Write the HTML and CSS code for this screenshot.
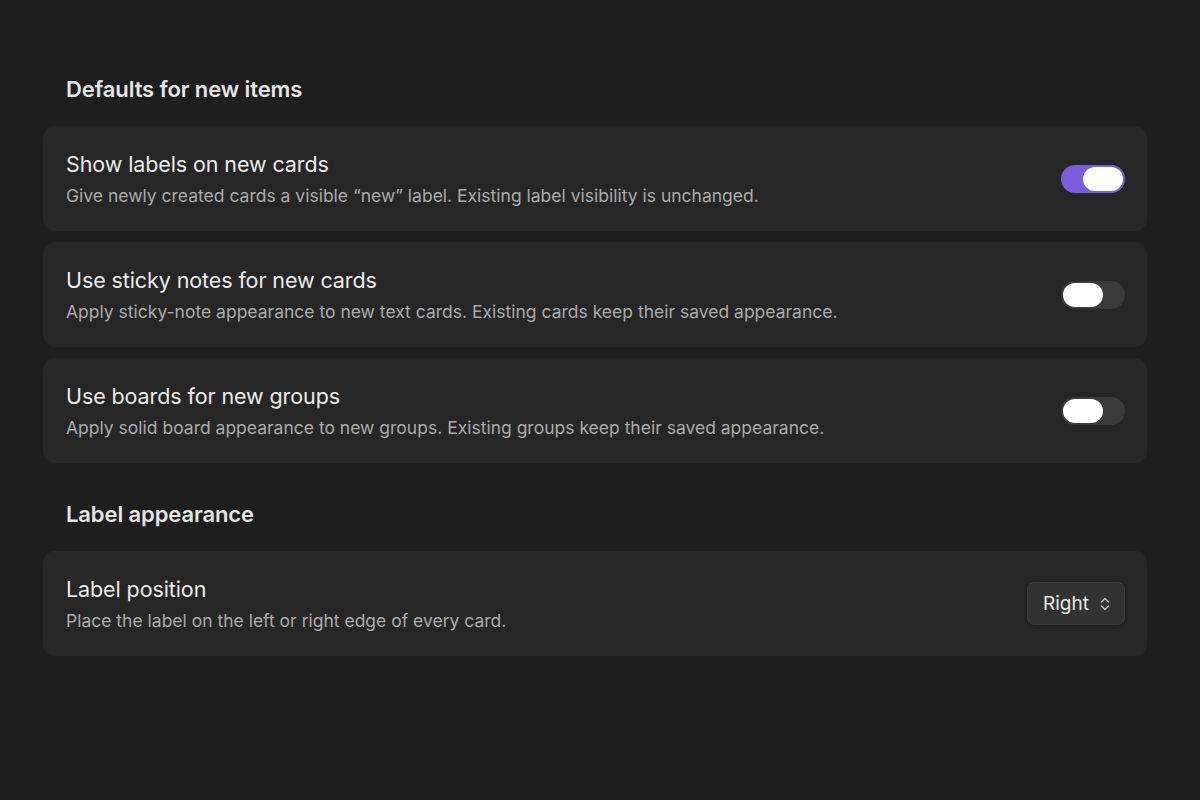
FILE: index.html
```html
<!DOCTYPE html>
<html lang="en">
<head>
<meta charset="utf-8">
<title>Settings</title>
<link rel="stylesheet" href="styles.css">
</head>
<body>
<main class="settings">
  <section class="group">
    <h2 class="group-title">Defaults for new items</h2>
    <div class="rows">
      <div class="row">
        <div class="text">
          <div class="title">Show labels on new cards</div>
          <div class="desc">Give newly created cards a visible “new” label. Existing label visibility is unchanged.</div>
        </div>
        <div class="toggle on"><span class="knob"></span></div>
      </div>
      <div class="row">
        <div class="text">
          <div class="title">Use sticky notes for new cards</div>
          <div class="desc">Apply sticky-note appearance to new text cards. Existing cards keep their saved appearance.</div>
        </div>
        <div class="toggle"><span class="knob"></span></div>
      </div>
      <div class="row">
        <div class="text">
          <div class="title">Use boards for new groups</div>
          <div class="desc">Apply solid board appearance to new groups. Existing groups keep their saved appearance.</div>
        </div>
        <div class="toggle"><span class="knob"></span></div>
      </div>
    </div>
  </section>
  <section class="group">
    <h2 class="group-title">Label appearance</h2>
    <div class="rows">
      <div class="row">
        <div class="text">
          <div class="title">Label position</div>
          <div class="desc">Place the label on the left or right edge of every card.</div>
        </div>
        <button class="select">
          <span>Right</span>
          <svg class="chev" width="10" height="14" viewBox="0 0 10 14" fill="none" stroke="currentColor" stroke-width="1.5" stroke-linecap="round" stroke-linejoin="round"><path d="M1.5 5 L5 1.5 L8.5 5"/><path d="M1.5 9 L5 12.5 L8.5 9"/></svg>
        </button>
      </div>
    </div>
  </section>
</main>
</body>
</html>
```

FILE: styles.css
```css
html, body {
  margin: 0;
  padding: 0;
  background: #1e1e1e;
}
body {
  font-family: Inter, "Noto Sans", "Liberation Sans", sans-serif;
  color: #e6e6e6;
  min-height: 800px;
}
.settings {
  width: 1104px;
  margin-left: 43px;
  padding-top: 75px;
  display: flex;
  flex-direction: column;
  gap: 37px;
}
.group {
  display: flex;
  flex-direction: column;
  gap: 23px;
}
.group-title {
  margin: 0;
  padding-left: 23px;
  font-size: 22px;
  line-height: 28px;
  font-weight: 600;
  color: #e4e4e4;
  letter-spacing: -0.1px;
}
.rows {
  display: flex;
  flex-direction: column;
  gap: 11px;
}
.row {
  background: #262626;
  border-radius: 12px;
  padding: 24px 22px 24px 23px;
  display: flex;
  align-items: center;
  justify-content: space-between;
}
.text {
  display: flex;
  flex-direction: column;
  gap: 7px;
}
.title {
  font-size: 21.5px;
  line-height: 28px;
  color: #ebebeb;
  letter-spacing: -0.1px;
}
.desc {
  font-size: 17.5px;
  line-height: 22px;
  color: #ababab;
}
.toggle {
  width: 64px;
  height: 28px;
  border-radius: 14px;
  background: #3a3a3a;
  padding: 2px;
  box-sizing: border-box;
  display: flex;
  justify-content: flex-start;
}
.toggle.on {
  background: #7b5ddb;
  justify-content: flex-end;
}
.knob {
  width: 40px;
  height: 24px;
  border-radius: 12px;
  background: #ffffff;
}
.select {
  font-family: inherit;
  height: 43px;
  width: 98px;
  padding: 0 14px 0 15px;
  border: 1px solid #3c3c3c;
  border-radius: 7px;
  background: #323232;
  color: #e8e8e8;
  font-size: 19px;
  display: flex;
  align-items: center;
  justify-content: space-between;
  box-shadow: 0 1px 3px rgba(0,0,0,0.35);
}
.chev {
  color: #bdbdbd;
}
```
